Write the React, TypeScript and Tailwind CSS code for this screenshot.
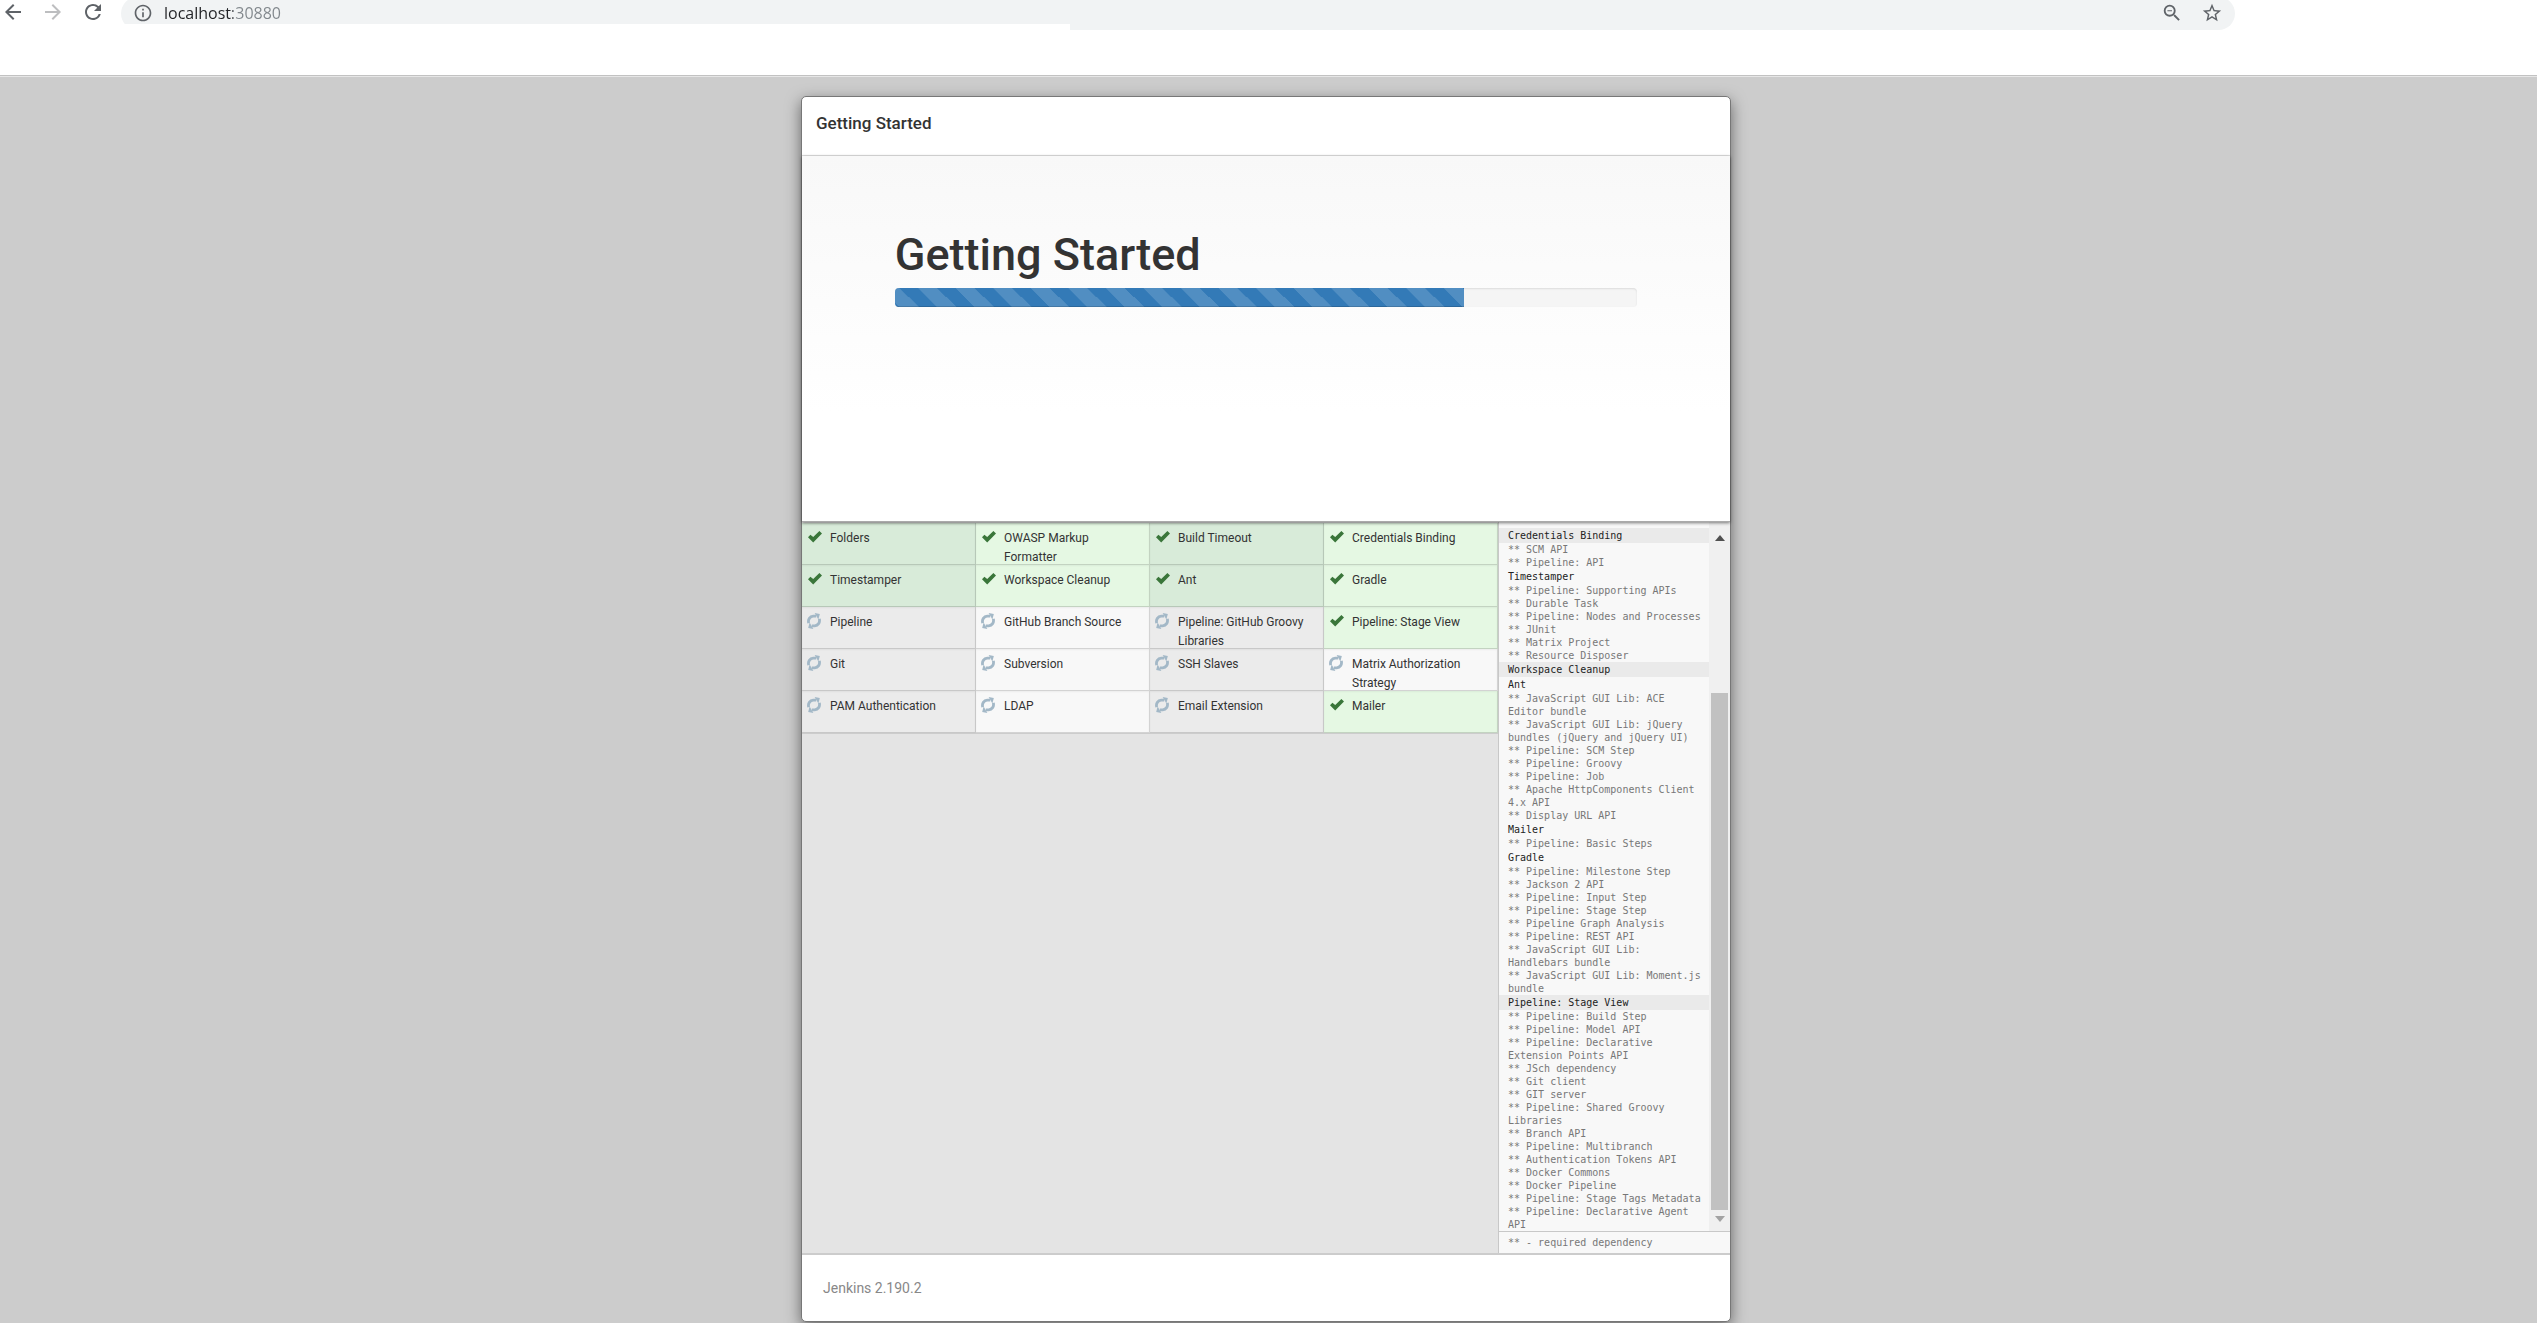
import { MdArrowBack, MdArrowForward, MdRefresh, MdInfoOutline, MdZoomOut, MdStarBorder } from "react-icons/md";

type Status = "success" | "pending";

const plugins: { name: string; status: Status }[] = [
  { name: "Folders", status: "success" },
  { name: "OWASP Markup Formatter", status: "success" },
  { name: "Build Timeout", status: "success" },
  { name: "Credentials Binding", status: "success" },
  { name: "Timestamper", status: "success" },
  { name: "Workspace Cleanup", status: "success" },
  { name: "Ant", status: "success" },
  { name: "Gradle", status: "success" },
  { name: "Pipeline", status: "pending" },
  { name: "GitHub Branch Source", status: "pending" },
  { name: "Pipeline: GitHub Groovy Libraries", status: "pending" },
  { name: "Pipeline: Stage View", status: "success" },
  { name: "Git", status: "pending" },
  { name: "Subversion", status: "pending" },
  { name: "SSH Slaves", status: "pending" },
  { name: "Matrix Authorization Strategy", status: "pending" },
  { name: "PAM Authentication", status: "pending" },
  { name: "LDAP", status: "pending" },
  { name: "Email Extension", status: "pending" },
  { name: "Mailer", status: "success" },
];

const log: { title: string; shaded?: boolean; deps: string[] }[] = [
  { title: "Credentials Binding", shaded: true, deps: ["SCM API", "Pipeline: API"] },
  {
    title: "Timestamper",
    deps: [
      "Pipeline: Supporting APIs",
      "Durable Task",
      "Pipeline: Nodes and Processes",
      "JUnit",
      "Matrix Project",
      "Resource Disposer",
    ],
  },
  { title: "Workspace Cleanup", shaded: true, deps: [] },
  {
    title: "Ant",
    deps: [
      "JavaScript GUI Lib: ACE Editor bundle",
      "JavaScript GUI Lib: jQuery bundles (jQuery and jQuery UI)",
      "Pipeline: SCM Step",
      "Pipeline: Groovy",
      "Pipeline: Job",
      "Apache HttpComponents Client 4.x API",
      "Display URL API",
    ],
  },
  { title: "Mailer", deps: ["Pipeline: Basic Steps"] },
  {
    title: "Gradle",
    deps: [
      "Pipeline: Milestone Step",
      "Jackson 2 API",
      "Pipeline: Input Step",
      "Pipeline: Stage Step",
      "Pipeline Graph Analysis",
      "Pipeline: REST API",
      "JavaScript GUI Lib: Handlebars bundle",
      "JavaScript GUI Lib: Moment.js bundle",
    ],
  },
  {
    title: "Pipeline: Stage View",
    shaded: true,
    deps: [
      "Pipeline: Build Step",
      "Pipeline: Model API",
      "Pipeline: Declarative Extension Points API",
      "JSch dependency",
      "Git client",
      "GIT server",
      "Pipeline: Shared Groovy Libraries",
      "Branch API",
      "Pipeline: Multibranch",
      "Authentication Tokens API",
      "Docker Commons",
      "Docker Pipeline",
      "Pipeline: Stage Tags Metadata",
      "Pipeline: Declarative Agent API",
    ],
  },
];

function CheckIcon() {
  return (
    <svg viewBox="0 0 14 12" className="mt-2 ml-[6px] h-3 w-[14px] shrink-0" aria-hidden="true">
      <path d="M0 6.200 2.400 3.700 5.200 6.100 11.400 0 14 2.500 5.200 11.500Z" fill="#3a763a" />
    </svg>
  );
}

function SyncIcon() {
  return (
    <svg viewBox="0 0 14 16" className="mt-[6px] ml-[5px] mr-px h-4 w-[14px] shrink-0" aria-hidden="true">
      <g fill="none" stroke="#a3b8c7" strokeWidth="2.800">
        <path d="M1.700 10.200C.7 6.400 3 3.400 6.200 3.200h3" />
        <path d="M12.300 5.800c1 3.800-1.300 6.800-4.500 7h-3" />
      </g>
      <path d="M7.600 0 12.800 1 11.400 6.600Z" fill="#a3b8c7" />
      <path d="M6.400 16 1.200 15 2.600 9.400Z" fill="#a3b8c7" />
    </svg>
  );
}

function BrowserBar() {
  return (
    <header className="h-[77px] border-b border-[#e6e6e6] bg-white">
      <div className="flex h-[76px] items-start border-b border-[#c2c2c2]">
        <nav className="flex w-[121px] shrink-0 gap-4 pl-px text-[24px] text-[#5f6368]">
          <button type="button" aria-label="Back"><MdArrowBack /></button>
          <button type="button" aria-label="Forward" className="text-[#bdbec0]"><MdArrowForward /></button>
          <button type="button" aria-label="Reload"><MdRefresh /></button>
        </nav>
        <div className="h-6 w-[949px] shrink-0 overflow-hidden">
          <div className="-mt-[3px] flex h-[33px] items-center rounded-l-full bg-[#f1f3f4] pl-3">
            <button type="button" aria-label="Site information" className="-mt-px text-[20px] text-[#5f6368]">
              <MdInfoOutline />
            </button>
            <input
              aria-label="Address"
              defaultValue="localhost:30880"
              className="-mt-px ml-[11px] w-[400px] bg-linear-to-r from-[#202124] from-[69px] to-[#80868b] to-[69px] bg-clip-text font-['Open_Sans',sans-serif] text-[16px] text-transparent outline-none"
            />
          </div>
        </div>
        <div className="h-[30px] min-w-0 flex-1 overflow-hidden">
          <div className="-mt-[3px] flex h-[33px] items-center justify-end gap-[18px] rounded-r-full bg-[#f1f3f4] pr-3 text-[22px] text-[#5f6368]">
            <button type="button" aria-label="Zoom out" className="-mt-px"><MdZoomOut /></button>
            <button type="button" aria-label="Bookmark this page" className="-mt-px"><MdStarBorder /></button>
          </div>
        </div>
        <div className="w-[302px] shrink-0" />
      </div>
    </header>
  );
}

function PluginCell({ name, status, index }: { name: string; status: Status; index: number }) {
  const even = index % 2 === 0;
  const tone =
    status === "success" ? (even ? "bg-[#d8ebd9]" : "bg-[#e5f8e3]") : even ? "bg-[#ebebeb]" : "bg-[#f8f8f8]";
  return (
    <li
      className={`flex h-[42px] overflow-hidden border-r border-b border-black/15 shadow-[inset_0_1px_2px_rgba(0,0,0,0.05)] ${tone}`}
    >
      {status === "success" ? <CheckIcon /> : <SyncIcon />}
      <span className="mt-[6px] ml-2 pr-4 text-[12px] leading-[19px] text-[#333]">{name}</span>
    </li>
  );
}

function InstallLog() {
  return (
    <aside className="flex w-1/4 flex-col border-l border-[#c8c8c8] bg-[#f8f8f8] font-['DejaVu_Sans_Mono',monospace] text-[10px] text-[#777]">
      <div className="flex">
        <div className="min-w-0 flex-1 pt-[6px] leading-[13px]">
          {log.map((entry) => (
            <section key={entry.title}>
              <h3 className={`pl-[9px] leading-[15px] text-[#222] ${entry.shaded ? "bg-[#eaeaea]" : ""}`}>
                {entry.title}
              </h3>
              {entry.deps.map((dep) => (
                <p key={dep} className="pr-[6px] pl-[9px]">{`** ${dep}`}</p>
              ))}
            </section>
          ))}
        </div>
        <div className="flex w-[21px] shrink-0 flex-col items-center bg-[#f0f0f0]">
          <svg viewBox="0 0 10 6" className="mt-[13px] h-[6px] w-[10px]" aria-hidden="true">
            <path d="M0 6 5 0 10 6Z" fill="#505050" />
          </svg>
          <div className="mt-[152px] w-[17px] flex-1 bg-[#c1c1c1]" />
          <svg viewBox="0 0 10 6" className="mt-[6px] mb-[9px] h-[6px] w-[10px]" aria-hidden="true">
            <path d="M0 0 5 6 10 0Z" fill="#a3a3a3" />
          </svg>
        </div>
      </div>
      <p className="border-t border-[#c8c8c8] pl-[9px] leading-[21px]">** - required dependency</p>
    </aside>
  );
}

export default function App() {
  return (
    <div className="min-h-screen bg-[#ccc] font-[Roboto,sans-serif] text-[#333]">
      <BrowserBar />
      <div className="flex justify-center pt-[19px] pr-[5px] pb-[2px]">
        <main className="w-[930px] rounded-[5px] border border-[#777] bg-white shadow-[0_5px_15px_rgba(0,0,0,0.5)]">
          <div className="flex h-[59px] items-start border-b border-[#e2e2e2] px-[14px] pt-[14px]">
            <h4 className="text-[17px] leading-6 font-medium">Getting Started</h4>
          </div>
          <div className="relative h-[366px] border-b border-[#aaa] bg-linear-to-b from-[#f8f8f8] to-white to-70% px-[10%] pt-[74px] shadow-[0_1px_3px_rgba(0,0,0,0.5)]">
            <h1 className="text-[45px] leading-[50px] font-medium">Getting Started</h1>
            <div
              role="progressbar"
              aria-label="Installation progress"
              aria-valuenow={77}
              className="mt-2 h-[19px] overflow-hidden rounded-[4px] bg-[#f5f5f5] shadow-[inset_0_1px_2px_rgba(0,0,0,0.1)]"
            >
              <div className="h-full w-[76.7%] bg-[#337ab7] bg-[linear-gradient(45deg,rgba(255,255,255,.15)_25%,transparent_25%,transparent_50%,rgba(255,255,255,.15)_50%,rgba(255,255,255,.15)_75%,transparent_75%,transparent)] bg-[length:6.6%_38px] bg-[position:-14px_0] shadow-[inset_0_-1px_0_rgba(0,0,0,0.15)]" />
            </div>
          </div>
          <div className="flex border-b-2 border-[#ccc] bg-[#e4e4e4]">
            <div className="w-3/4">
              <ul className="grid grid-cols-4 border-b border-[#ccc] pt-px">
                {plugins.map((plugin, index) => (
                  <PluginCell key={plugin.name} name={plugin.name} status={plugin.status} index={index} />
                ))}
              </ul>
            </div>
            <InstallLog />
          </div>
          <footer className="px-[21px] pt-[23px] pb-[23px] text-[14px] leading-5 text-[#888]">Jenkins 2.190.2</footer>
        </main>
      </div>
    </div>
  );
}
